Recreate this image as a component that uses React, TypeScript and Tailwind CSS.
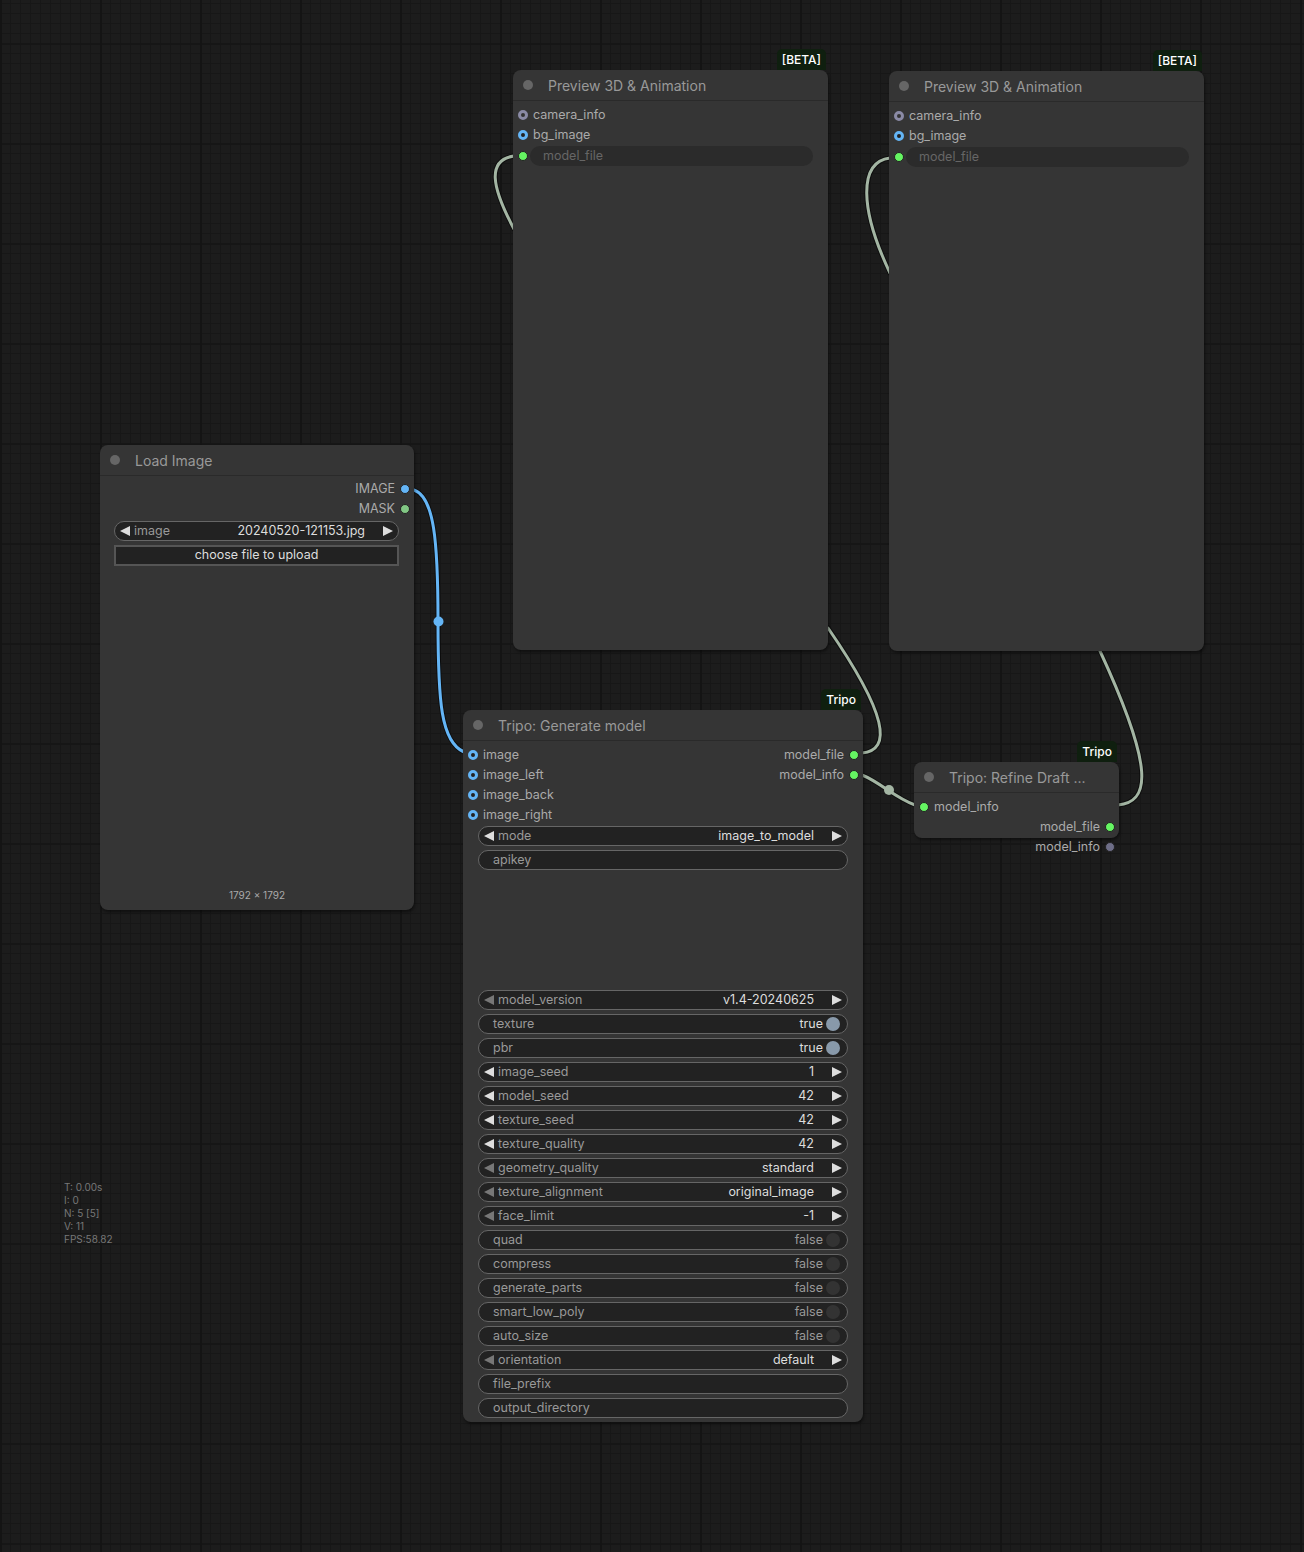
import React from "react";

const wire = "#a3b5a3";

function Dot({ kind }: { kind: "blue" | "gray" | "green" | "mask" | "blueSolid" | "grayOut" }) {
  if (kind === "blue")
    return <span className="block w-[10px] h-[10px] rounded-full border-[3px] border-[#64b5f6] bg-[#222]" />;
  if (kind === "gray")
    return <span className="block w-[10px] h-[10px] rounded-full border-[3px] border-[#8a8aa5] bg-[#333]" />;
  if (kind === "green")
    return <span className="block w-[10px] h-[10px] rounded-full border border-[#222] bg-[#65f562]" />;
  if (kind === "mask")
    return <span className="block w-[10px] h-[10px] rounded-full border border-[#222] bg-[#81c784]" />;
  if (kind === "blueSolid")
    return <span className="block w-[10px] h-[10px] rounded-full border border-[#222] bg-[#64b5f6]" />;
  return <span className="block w-[10px] h-[10px] rounded-full border border-[#222] bg-[#6e6e88]" />;
}

function Input({ label, kind }: { label: string; kind: "blue" | "gray" | "green" }) {
  return (
    <div className="h-5 flex items-center pl-[5px] gap-[5px] text-[12.5px] text-[#aaa]">
      <Dot kind={kind} />
      <span>{label}</span>
    </div>
  );
}

function Output({ label, kind }: { label: string; kind: "green" | "mask" | "blueSolid" | "grayOut" }) {
  return (
    <div className="h-5 flex items-center justify-end pr-[4px] gap-[5px] text-[12.5px] text-[#aaa]">
      <span>{label}</span>
      <Dot kind={kind} />
    </div>
  );
}

function Title({ text }: { text: string }) {
  return (
    <div className="h-[31px] shrink-0 flex items-center pl-[10px] gap-[10px] border-b border-[#2a2a2a] text-[14px] text-[#999]">
      <span className="w-[10px] h-[10px] rounded-full bg-[#666]" />
      <span className="ml-[5px]">{text}</span>
    </div>
  );
}

function Badge({ text }: { text: string }) {
  return (
    <div className="absolute right-[2px] top-[-21px] h-[21px] px-[5px] rounded-t-[5px] bg-[#0f1f0f] text-white text-[12px] leading-[22px] font-medium">
      {text}
    </div>
  );
}

function Tri({ left, dim }: { left?: boolean; dim?: boolean }) {
  return (
    <svg width="10" height="10" viewBox="0 0 10 10" className="shrink-0">
      <polygon points={left ? "10,0 10,10 0,5" : "0,0 0,10 10,5"} fill={dim ? "#777" : "#ddd"} />
    </svg>
  );
}

function Combo({ label, value, dim }: { label: string; value: string; dim?: boolean }) {
  return (
    <div className="h-5 shrink-0 rounded-full border border-[#666] bg-[#222] flex items-center pl-[5px] pr-[5px] text-[12.5px]">
      <Tri left dim={dim} />
      <span className="ml-[4px] text-[#999]">{label}</span>
      <span className="ml-auto mr-[18px] text-[#ddd]">{value}</span>
      <Tri />
    </div>
  );
}

function Toggle({ label, on }: { label: string; on?: boolean }) {
  return (
    <div className="h-5 shrink-0 rounded-full border border-[#666] bg-[#222] flex items-center pl-[14px] pr-[7px] text-[12.5px]">
      <span className="text-[#999]">{label}</span>
      <span className={on ? "ml-auto mr-[3px] text-[#ddd]" : "ml-auto mr-[3px] text-[#999]"}>{on ? "true" : "false"}</span>
      <span className={on ? "w-[14px] h-[14px] rounded-full bg-[#8899aa]" : "w-[14px] h-[14px] rounded-full bg-[#333]"} />
    </div>
  );
}

function Text({ label }: { label: string }) {
  return (
    <div className="h-5 shrink-0 rounded-full border border-[#666] bg-[#222] flex items-center pl-[14px] text-[12.5px] text-[#999]">
      {label}
    </div>
  );
}

function Preview({ cls }: { cls: string }) {
  return (
    <div className={cls}>
      <Badge text="[BETA]" />
      <Title text="Preview 3D & Animation" />
      <div className="pt-[4px]">
        <Input label="camera_info" kind="gray" />
        <Input label="bg_image" kind="blue" />
        <div className="relative h-5 mt-px flex items-center pl-[5px]">
          <Dot kind="green" />
          <div className="ml-[2px] h-5 w-[283px] rounded-full bg-[#2b2b2b] pl-[13px] flex items-center text-[12.5px] text-[#666]">
            model_file
          </div>
        </div>
      </div>
    </div>
  );
}

const node = "absolute rounded-[8px] bg-[#353535] shadow-[1px_2px_3px_rgba(0,0,0,0.45)] flex flex-col";

export default function App() {
  return (
    <div className="relative w-[1304px] h-[1552px] overflow-hidden [font-family:Inter,sans-serif] bg-[#1c1c1c] bg-[linear-gradient(to_right,#141414_2px,transparent_2px),linear-gradient(to_bottom,#161616_2px,transparent_2px),linear-gradient(to_right,#171717_1px,transparent_1px),linear-gradient(to_bottom,#171717_1px,transparent_1px)] bg-[size:100px_100px,100px_100px,10px_10px,10px_10px] bg-[position:0_0,0_43px,0_0,0_3px]">
      <svg className="absolute inset-0" width="1304" height="1552">
        <g fill="none" strokeLinecap="round">
          <path id="w" d="M414 490 C434 497 438 540 438 621 C438 702 441 742 464 752" stroke="#000" strokeOpacity="0.5" strokeWidth="5" />
          <path d="M414 490 C434 497 438 540 438 621 C438 702 441 742 464 752" stroke="#64b5f6" strokeWidth="3" />
          {[
            "M514 156 C487 160 491 186 514 229",
            "M890 158 C858 162 860 210 890 273",
            "M862 753 C892 750 888 715 828 628",
            "M862 775 C880 782 895 798 915 805",
            "M1118 805 C1150 802 1155 770 1100 651",
          ].map((d) => (
            <g key={d}>
              <path d={d} stroke="#000" strokeOpacity="0.5" strokeWidth="5" />
              <path d={d} stroke={wire} strokeWidth="3" />
            </g>
          ))}
        </g>
        <circle cx="438.5" cy="621.5" r="5" fill="#64b5f6" />
        <circle cx="889" cy="790" r="5" fill={wire} />
      </svg>

      <Preview cls={`${node} left-[513px] top-[70px] w-[315px] h-[580px]`} />
      <Preview cls={`${node} left-[889px] top-[71px] w-[315px] h-[580px]`} />

      <div className={`${node} left-[100px] top-[445px] w-[314px] h-[465px]`}>
        <Title text="Load Image" />
        <div className="pt-[3px]">
          <Output label="IMAGE" kind="blueSolid" />
          <Output label="MASK" kind="mask" />
        </div>
        <div className="mt-[2px] mx-[14px] mr-[15px] flex flex-col gap-1">
          <Combo label="image" value="20240520-121153.jpg" />
          <div className="h-[21px] border-2 border-[#555] bg-[#222] flex items-center justify-center text-[12.5px] text-[#ddd]">
            choose file to upload
          </div>
        </div>
        <div className="mt-auto mb-[7px] text-center text-[10px] text-[#aaa]">1792 × 1792</div>
      </div>

      <div className={`${node} left-[463px] top-[710px] w-[400px] h-[712px]`}>
        <Badge text="Tripo" />
        <Title text="Tripo: Generate model" />
        <div className="pt-[4px] relative">
          <Input label="image" kind="blue" />
          <Input label="image_left" kind="blue" />
          <Input label="image_back" kind="blue" />
          <Input label="image_right" kind="blue" />
          <div className="absolute right-0 top-[4px] w-[120px]">
            <Output label="model_file" kind="green" />
            <Output label="model_info" kind="green" />
          </div>
        </div>
        <div className="mt-px mx-[15px] flex flex-col gap-1">
          <Combo label="mode" value="image_to_model" />
          <Text label="apikey" />
          <div className="h-[112px]" />
          <Combo label="model_version" value="v1.4-20240625" dim />
          <Toggle label="texture" on />
          <Toggle label="pbr" on />
          <Combo label="image_seed" value="1" />
          <Combo label="model_seed" value="42" />
          <Combo label="texture_seed" value="42" />
          <Combo label="texture_quality" value="42" />
          <Combo label="geometry_quality" value="standard" dim />
          <Combo label="texture_alignment" value="original_image" dim />
          <Combo label="face_limit" value="-1" dim />
          <Toggle label="quad" />
          <Toggle label="compress" />
          <Toggle label="generate_parts" />
          <Toggle label="smart_low_poly" />
          <Toggle label="auto_size" />
          <Combo label="orientation" value="default" dim />
          <Text label="file_prefix" />
          <Text label="output_directory" />
        </div>
      </div>

      <div className={`${node} left-[914px] top-[762px] w-[205px] h-[76px]`}>
        <Badge text="Tripo" />
        <Title text="Tripo: Refine Draft ..." />
        <div className="pt-[4px] relative">
          <Input label="model_info" kind="green" />
          <Output label="model_file" kind="green" />
          <Output label="model_info" kind="grayOut" />
          <div className="hidden" />
        </div>
      </div>

      <div className="absolute left-[64px] top-[1181px] text-[10px] leading-[13px] text-[#777]">
        <div>T: 0.00s</div>
        <div>I: 0</div>
        <div>N: 5 [5]</div>
        <div>V: 11</div>
        <div>FPS:58.82</div>
      </div>
    </div>
  );
}
